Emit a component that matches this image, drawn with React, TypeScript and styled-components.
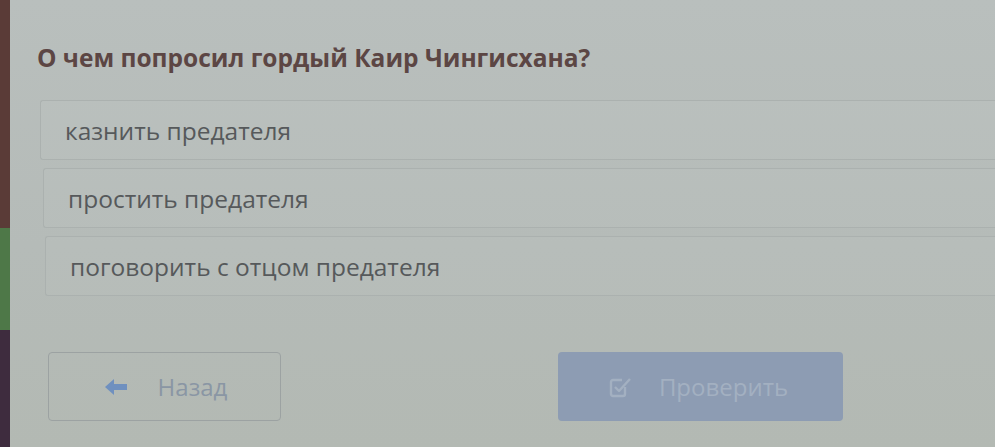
import React from "react";
import styled, { createGlobalStyle } from "styled-components";

const Global = createGlobalStyle`
  html, body { margin: 0; padding: 0; }
  body { font-family: "Open Sans", "Liberation Sans", sans-serif; background: #b6bcb9; }
`;

const Page = styled.div`
  display: grid;
  grid-template-columns: 10px 1fr;
  width: 995px;
  height: 447px;
  overflow: hidden;
  background: linear-gradient(180deg, #b9bfbd 0%, #b5bbb8 55%, #b3b9b3 100%);
`;

const Strip = styled.div`
  display: flex;
  flex-direction: column;
`;

const StripPart = styled.div<{ $h: number; $c: string }>`
  height: ${(p) => p.$h}px;
  background: ${(p) => p.$c};
  flex: ${(p) => (p.$h === 0 ? 1 : "none")};
`;

const Content = styled.div`
  display: flex;
  flex-direction: column;
  padding: 40px 0 0 27px;
  margin-right: -20px;
`;

const Title = styled.h2`
  margin: 0;
  font-size: 24.5px;
  line-height: 36px;
  font-weight: 700;
  color: #5c4644;
`;

const Options = styled.div`
  display: flex;
  flex-direction: column;
  gap: 8px;
  margin: 24px 0 0 3px;
`;

const Option = styled.div<{ $indent: number }>`
  display: flex;
  align-items: center;
  height: 60px;
  box-sizing: border-box;
  margin-left: ${(p) => p.$indent}px;
  padding-left: 24px;
  border: 1px solid #abb1af;
  border-right: none;
  border-radius: 3px 0 0 3px;
  background: rgba(255, 255, 255, 0.03);
  font-size: 24.5px;
  color: #56595b;
`;

const Buttons = styled.div`
  display: flex;
  align-items: center;
  margin-top: 56px;
  padding-left: 11px;
  gap: 277px;
`;

const BackButton = styled.button`
  display: flex;
  align-items: center;
  justify-content: center;
  gap: 31px;
  width: 233px;
  height: 69px;
  border: 1px solid #9ca2a2;
  border-radius: 4px;
  background: transparent;
  font-family: inherit;
  font-size: 24px;
  color: #8a96a4;
  padding: 0 0 0 3px;
`;

const CheckButton = styled.button`
  display: flex;
  align-items: center;
  justify-content: center;
  gap: 27px;
  width: 285px;
  height: 69px;
  border: none;
  border-radius: 4px;
  background: #8d9cb3;
  font-family: inherit;
  font-size: 24px;
  color: #a3b0c1;
  padding: 0 4px 0 0;
`;

export default function App() {
  return (
    <>
      <Global />
      <Page>
        <Strip>
          <StripPart $h={228} $c="#5a3b37" />
          <StripPart $h={102} $c="#4e7848" />
          <StripPart $h={0} $c="#3e2c3e" />
        </Strip>
        <Content>
          <Title>О чем попросил гордый Каир Чингисхана?</Title>
          <Options>
            <Option $indent={0}>казнить предателя</Option>
            <Option $indent={3}>простить предателя</Option>
            <Option $indent={5}>поговорить с отцом предателя</Option>
          </Options>
          <Buttons>
            <BackButton>
              <svg width="22" height="16" viewBox="0 0 22 16">
                <path d="M0 8 L9 0 L9 5 L22 5 L22 11 L9 11 L9 16 Z" fill="#6f90bf" />
              </svg>
              Назад
            </BackButton>
            <CheckButton>
              <svg width="23" height="22" viewBox="0 0 23 22" fill="none" stroke="#a3b0c1" strokeWidth="2.4" strokeLinejoin="round">
                <path d="M16 11 V18 A2 2 0 0 1 14 20 H4 A2 2 0 0 1 2 18 V6 A2 2 0 0 1 4 4 H13" />
                <path d="M6 11 L10 15 L21 3" />
              </svg>
              Проверить
            </CheckButton>
          </Buttons>
        </Content>
      </Page>
    </>
  );
}
